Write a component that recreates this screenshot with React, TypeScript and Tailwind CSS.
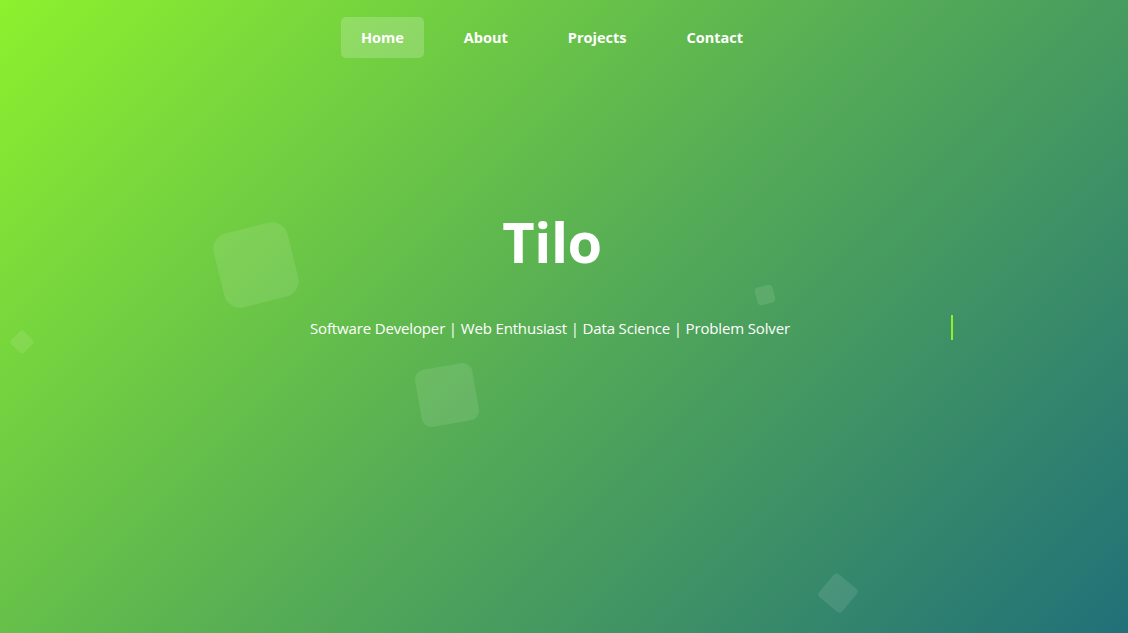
const NAV_LINKS = ["Home", "About", "Projects", "Contact"];

const SHAPES = [
  "left-[218px] top-[227px] w-[76px] h-[76px] rounded-[16px] -rotate-[14deg] bg-white/10",
  "left-[13px] top-[333px] w-[18px] h-[18px] rounded-[3px] rotate-45 bg-white/10",
  "left-[418px] top-[366px] w-[58px] h-[58px] rounded-[10px] -rotate-[10deg] bg-white/10",
  "left-[756px] top-[286px] w-[18px] h-[18px] rounded-[4px] -rotate-[15deg] bg-white/10",
  "left-[823px] top-[578px] w-[30px] h-[30px] rounded-[4px] rotate-[40deg] bg-white/10",
];

const App = () => {
  return (
    <div
      className="relative min-h-screen h-[633px] overflow-hidden bg-[linear-gradient(135deg,#8ef12d_0%,#56ad55_50%,#217079_100%)] text-white"
      style={{ fontFamily: '"Open Sans", "Noto Sans", sans-serif' }}
    >
      {SHAPES.map((s, i) => (
        <div key={i} className={`absolute ${s}`} />
      ))}

      <div className="relative w-[1104px]">
        <nav className="flex justify-center gap-5 pt-[17px]">
          {NAV_LINKS.map((link, i) => (
            <a
              key={link}
              className={`h-[41px] flex items-center px-5 rounded-[5px] text-[14.5px] font-bold ${
                i === 0 ? "bg-white/20" : ""
              }`}
            >
              {link}
            </a>
          ))}
        </nav>

        <header className="flex flex-col items-center mt-[151px]">
          <h1 className="text-[56px] leading-[64px] font-bold tracking-[-0.5px]">Tilo</h1>
          <div className="relative mt-[44px] w-[484px]">
            <p className="text-[15px] leading-[22px] whitespace-nowrap tracking-[-0.15px]">
              Software Developer | Web Enthusiast | Data Science | Problem Solver
            </p>
            <span className="absolute left-[641px] top-[-2px] h-[25px] w-[2px] bg-[#8ef12d]" />
          </div>
        </header>
      </div>
    </div>
  );
};

export default App;
